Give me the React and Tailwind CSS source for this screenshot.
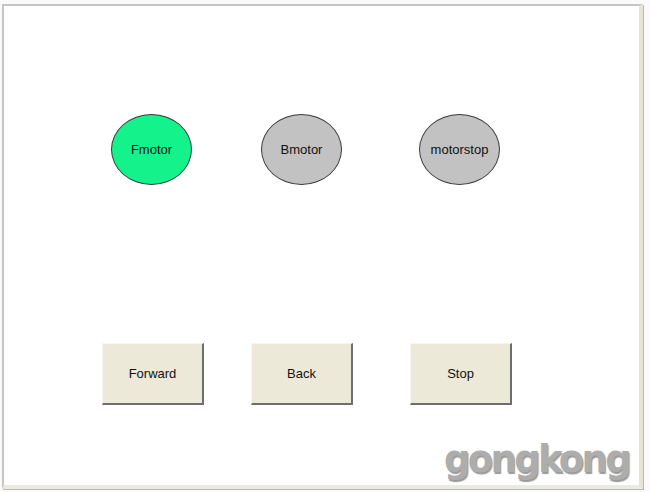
import React from "react";

const font = { fontFamily: '"Liberation Sans", Arial, sans-serif' };

function Lamp({ label, on }) {
  return (
    <div
      className={`w-[81px] h-[71px] rounded-[50%] border border-[#3a3a3a] flex items-center justify-center text-[13px] text-[#111] ${
        on ? "bg-[#14f28c]" : "bg-[#c2c2c2]"
      }`}
    >
      {label}
    </div>
  );
}

function Btn({ label }) {
  return (
    <div className="w-[102px] h-[62px] bg-[#ece9d8] border-t border-l border-[#f7f6ef] border-r-2 border-b-2 border-r-[#6e6e6e] border-b-[#6e6e6e] flex items-center justify-center text-[13px] text-[#111]">
      {label}
    </div>
  );
}

export default function App() {
  return (
    <div className="w-[650px] h-[492px] bg-[#fafafa] pt-[4px] pl-[2px] relative" style={font}>
      <div className="w-[641px] h-[485px] bg-white border-t-[2px] border-l-[2px] border-[#c6c6c6] border-r-[4px] border-b-[4px] border-r-[#e6e4d4] border-b-[#eceadb] shadow-[1px_1px_0_#b8b8b8] flex flex-col">
        <div className="flex mt-[108px] ml-[107px]">
          <Lamp label="Fmotor" on />
          <div className="w-[69px]" />
          <Lamp label="Bmotor" />
          <div className="w-[77px]" />
          <Lamp label="motorstop" />
        </div>
        <div className="flex mt-[158px] ml-[98px]">
          <Btn label="Forward" />
          <div className="w-[47px]" />
          <Btn label="Back" />
          <div className="w-[57px]" />
          <Btn label="Stop" />
        </div>
      </div>
      <div
        className="absolute left-[444px] top-[441px] text-[37px] font-bold text-[#adadad] tracking-[-2.7px] leading-none"
        style={{ fontFamily: '"DejaVu Sans", Verdana, sans-serif', textShadow: "1px 2px 1px #9a9a9a" }}
      >
        gongkong
      </div>
    </div>
  );
}
